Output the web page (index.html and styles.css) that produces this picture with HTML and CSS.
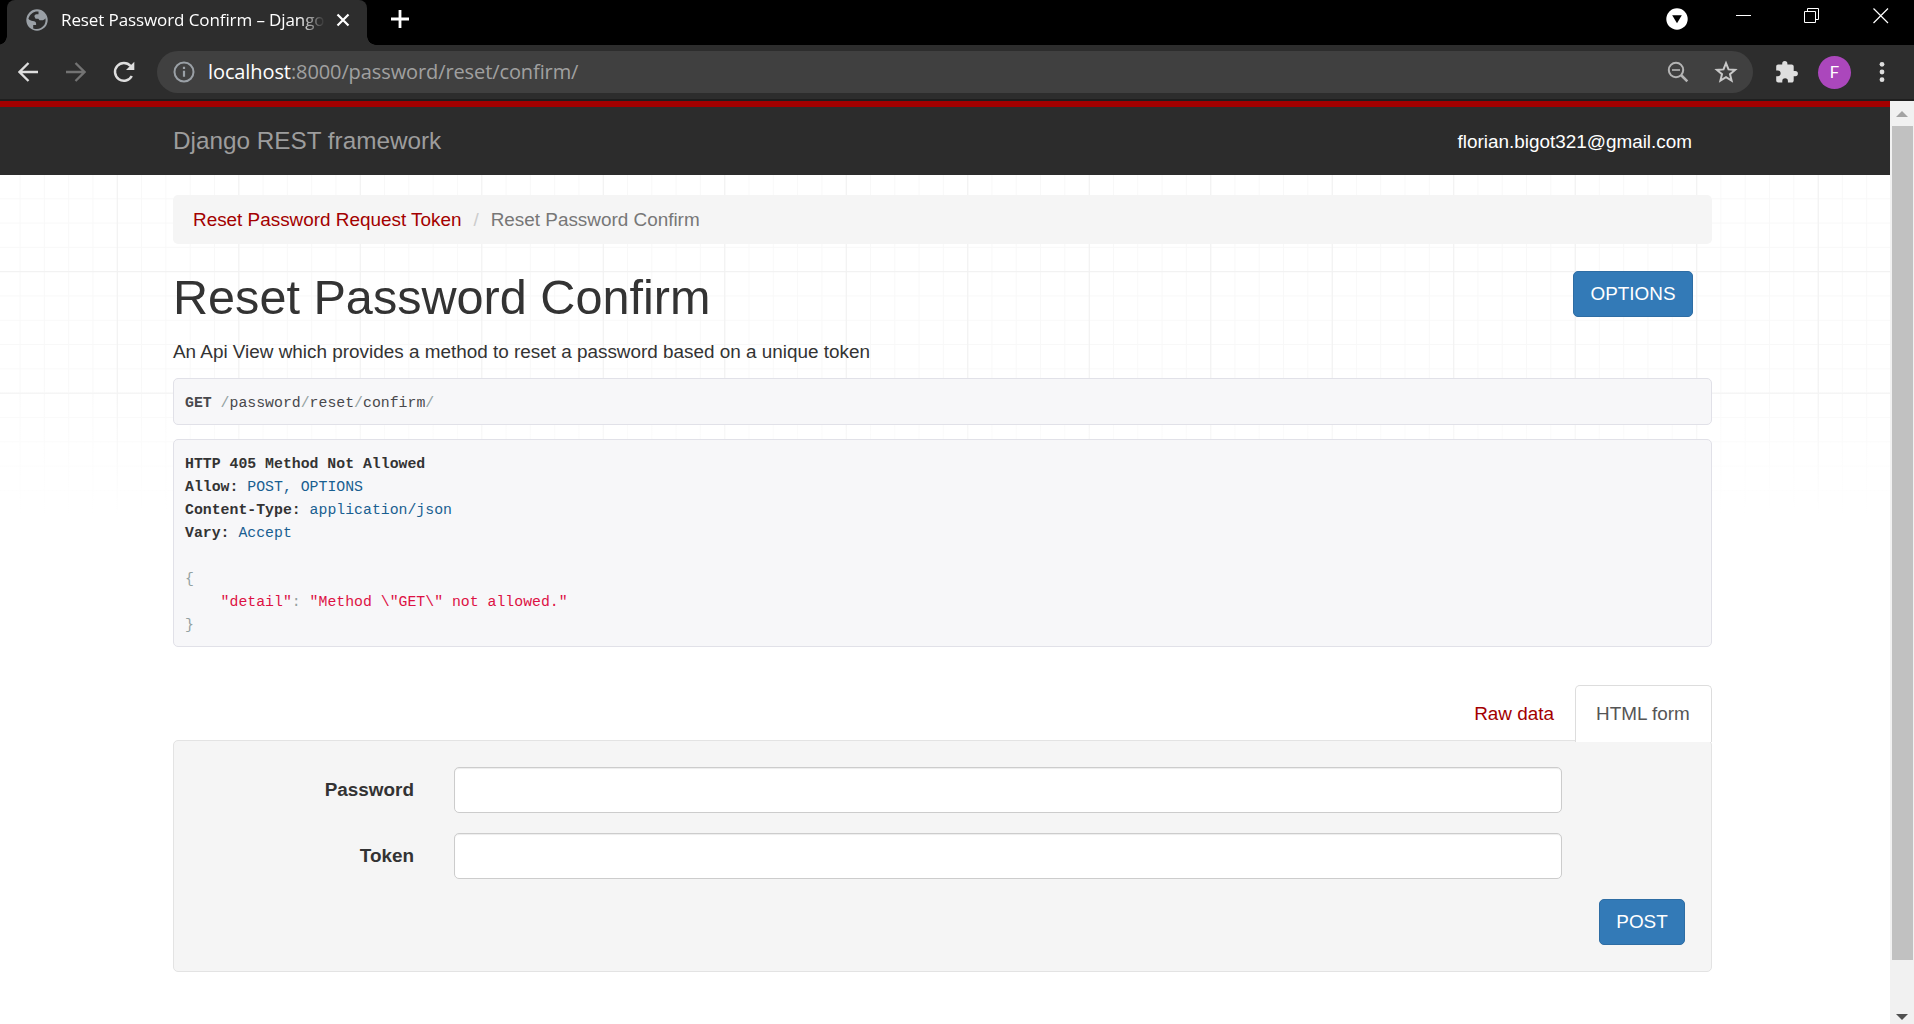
FILE: index.html
```html
<!DOCTYPE html>
<html lang="en">
<head>
<meta charset="utf-8">
<title>Reset Password Confirm – Django REST framework</title>
<link rel="stylesheet" href="styles.css">
</head>
<body>
<div class="window">
  <header class="titlebar">
    <div class="tab">
      <svg class="tab-icon" width="22" height="22" viewBox="0 0 22 22"><circle cx="11" cy="11" r="10.7" fill="#9aa0a6"/><path d="M12.500 2.600C9 1.800 3.600 4.500 2.400 9.800c1.200 1.600 2.600 2 4.400 2.100 2 0.200 3.300 1 3.300 2.700v1.500H7.200v3.300c4.600 1.500 8.300 0.200 11.200-3.700 1.200-2.200 1.400-4.300 1-6.500-0.800 1.500-2 2.100-3.900 2.100h-2l-1.200-1.600H9.600l-1.100-1.900c-0.200-1.500 0.500-2.500 2.100-2.600h1.900z" fill="#2d2d2d"/></svg>
      <span class="tab-title">Reset Password Confirm – Django</span>
      <svg class="tab-close" width="14" height="14" viewBox="0 0 14 14"><path d="M1.500 1.500l11 11M12.500 1.500l-11 11" stroke="#fff" stroke-width="2.200"/></svg>
    </div>
    <svg class="new-tab" width="18" height="18" viewBox="0 0 18 18"><path d="M9 0v18M0 9h18" stroke="#fff" stroke-width="2.800"/></svg>
    <div class="controls">
      <svg width="22" height="22" viewBox="0 0 22 22"><circle cx="11" cy="11" r="10.700" fill="#fff"/><path d="M6.200 7.200h9.600L11 15.200z" fill="#000"/></svg>
      <svg class="minimize" width="16" height="16" viewBox="0 0 16 16"><path d="M0 7.500h15" stroke="#fff"/></svg>
      <svg class="restore" width="16" height="16" viewBox="0 0 16 16"><path d="M0.500 3.500h11v11H0.500zM3.500 3.500V0.500h11v11h-3" fill="none" stroke="#fff"/></svg>
      <svg class="close" width="16" height="16" viewBox="0 0 16 16"><path d="M0.500 0.500l14.500 14.500M15 0.500l-14.500 14.500" stroke="#fff" stroke-width="1.200"/></svg>
    </div>
  </header>

  <div class="toolbar">
    <svg class="nav-icon" width="20" height="20" viewBox="0 0 20 20"><path d="M20 10H2M10.500 1L1.500 10l9 9" fill="none" stroke="#dedede" stroke-width="2.300"/></svg>
    <svg class="nav-icon" width="20" height="20" viewBox="0 0 20 20"><path d="M0 10h18M9.500 1l9 9-9 9" fill="none" stroke="#737373" stroke-width="2.300"/></svg>
    <svg class="nav-icon" width="22" height="22" viewBox="0 0 22 22"><path d="M18.800 15A8.900 8.900 0 1 1 17.600 5" fill="none" stroke="#dedede" stroke-width="2.500"/><path d="M21.300 0.700V9h-8.300z" fill="#dedede"/></svg>
    <div class="omnibox">
      <svg class="info" width="22" height="22" viewBox="0 0 22 22"><circle cx="11" cy="11" r="9.500" fill="none" stroke="#9aa0a6" stroke-width="2"/><path d="M11 9.800v6M11 5.800v2.200" stroke="#9aa0a6" stroke-width="2.200"/></svg>
      <span class="url"><b>localhost</b>:8000/password/reset/confirm/</span>
      <svg class="zoom-out" width="22" height="22" viewBox="0 0 22 22"><circle cx="9" cy="9" r="7.200" fill="none" stroke="#b4b4b4" stroke-width="2"/><path d="M5 9h8" stroke="#b4b4b4" stroke-width="1.600"/><path d="M14 14l6.300 6.300" stroke="#b4b4b4" stroke-width="2.600"/></svg>
      <svg class="star" width="24" height="24" viewBox="0 0 24 24"><path d="M12 3.200l2.500 6.200 6.600 0.500-5.100 4.300 1.600 6.500-5.600-3.500-5.600 3.500L8 14.200 2.900 9.900l6.600-0.500z" fill="none" stroke="#c8c8c8" stroke-width="2"/></svg>
    </div>
    <svg class="puzzle" width="22" height="22" viewBox="0 0 22 22"><path d="M19.300 10h-1.600V5.500c0-1.200-0.900-2.100-2.100-2.100h-4.200V2.700a2.600 2.600 0 0 0-5.200 0v0.700H2.200C1 3.400 0.200 4.300 0.200 5.500v3.900h1.500a2.900 2.900 0 0 1 0 5.800H0.200v4.400c0 1.200 0.900 2 2.100 2h4v-1.500a2.800 2.800 0 0 1 5.600 0v1.500h3.700c1.200 0 2.100-0.900 2.100-2.100v-4.300h1.600a2.600 2.600 0 0 0 0-5.200z" fill="#dedede"/></svg>
    <span class="avatar">F</span>
    <svg class="menu" width="6" height="22" viewBox="0 0 6 22"><g fill="#dedede"><circle cx="3" cy="3.300" r="2.400"/><circle cx="3" cy="11" r="2.400"/><circle cx="3" cy="18.700" r="2.400"/></g></svg>
  </div>

  <div class="viewport">
    <div class="page">
      <nav class="navbar">
        <div class="container navbar-inner">
          <span class="brand">Django REST framework</span>
          <span class="user">florian.bigot321@gmail.com</span>
        </div>
      </nav>
      <main class="content">
        <div class="container">
          <ul class="breadcrumb">
            <li><a>Reset Password Request Token</a></li>
            <li class="separator">/</li>
            <li class="active">Reset Password Confirm</li>
          </ul>
          <div class="page-header">
            <h1>Reset Password Confirm</h1>
            <button class="btn">OPTIONS</button>
          </div>
          <p class="description">An Api View which provides a method to reset a password based on a unique token</p>
          <pre class="request"><b>GET</b> <i>/</i>password<i>/</i>reset<i>/</i>confirm<i>/</i></pre>
          <pre class="response"><b>HTTP 405 Method Not Allowed</b>
<b>Allow:</b> <span class="lit">POST, OPTIONS</span>
<b>Content-Type:</b> <span class="lit">application/json</span>
<b>Vary:</b> <span class="lit">Accept</span>

<i>{</i>
    <span class="str">"detail"</span><i>:</i> <span class="str">"Method \"GET\" not allowed."</span>
<i>}</i></pre>
          <div class="tabs">
            <a class="tab-link">Raw data</a>
            <a class="tab-link selected">HTML form</a>
          </div>
          <form class="well">
            <div class="field"><label for="password">Password</label><input id="password" type="text"></div>
            <div class="field"><label for="token">Token</label><input id="token" type="text"></div>
            <div class="actions"><button class="btn" type="button">POST</button></div>
          </form>
        </div>
      </main>
    </div>
    <div class="scrollbar">
      <svg width="12" height="6" viewBox="0 0 12 6"><path d="M0 6L6 0l6 6z" fill="#a3a3a3"/></svg>
      <div class="thumb"></div>
      <svg class="down" width="12" height="6" viewBox="0 0 12 6"><path d="M0 0l6 6 6-6z" fill="#505050"/></svg>
    </div>
  </div>
</div>
</body>
</html>
```
FILE: styles.css
```css
* { box-sizing: border-box; }
body { margin: 0; background: #fff; color: #333; font: 18.9px/27px "Liberation Sans", Arial, sans-serif; }
svg { display: block; flex: none; }
.window { display: flex; flex-direction: column; width: 1914px; height: 1024px; overflow: hidden; }

/* browser frame */
.titlebar { display: flex; height: 45px; background: #000; font-family: "Open Sans", sans-serif; }
.tab { position: relative; display: flex; width: 360px; margin-left: 7px; padding: 9px 17px 0 19px; background: #2d2d2d; border-radius: 8px 8px 0 0; }
.tab::before, .tab::after { content: ""; position: absolute; bottom: 0; width: 9px; height: 9px; }
.tab::before { right: 100%; background: radial-gradient(circle at 0 0, #000 8.500px, #2d2d2d 9px); }
.tab::after { left: 100%; background: radial-gradient(circle at 100% 0, #000 8.500px, #2d2d2d 9px); }
.tab-title { width: 266px; margin-left: 13px; white-space: nowrap; color: #fff; font-size: 17px; line-height: 22px; letter-spacing: -0.100px; -webkit-mask-image: linear-gradient(90deg, #000 238px, transparent 264px); mask-image: linear-gradient(90deg, #000 238px, transparent 264px); }
.tab-close { margin: 4px 0 0 9px; }
.new-tab { margin: 10px 0 0 24px; }
.controls { display: flex; margin: 8px 25px 0 auto; }
.minimize { margin: 0 0 0 48px; }
.restore { margin: 0 0 0 52px; }
.close { margin: 0 0 0 53px; }

.toolbar { display: flex; align-items: center; height: 56px; padding: 0 29px 0 18px; background: #2d2d2d; border-bottom: 2px solid #1f1f1f; }
.nav-icon { margin-right: 28px; }
.nav-icon + .nav-icon + .nav-icon { margin: 0 22px 0 -1px; }
.omnibox { display: flex; align-items: center; width: 1596px; height: 42px; padding: 0 15px 0 16px; background: #404040; border-radius: 21px; font: 20px/30px "Open Sans", sans-serif; }
.url { margin-left: 13px; color: #a0a0a0; letter-spacing: -0.100px; }
.url b { font-weight: 400; color: #fff; }
.zoom-out { margin-left: auto; }
.star { margin-left: 25px; }
.puzzle { margin-left: 23px; }
.avatar { width: 33px; height: 33px; margin-left: 20px; border-radius: 50%; background: #ab47bc; color: #fff; text-align: center; font: 17px/33px Roboto, sans-serif; }
.menu { margin-left: auto; }

/* page */
.viewport { display: flex; flex: 1; min-height: 0; }
.page { display: flex; flex-direction: column; width: 1890px; }
.container { width: 1539px; margin: 0 auto 0 173px; }
.navbar { height: 74px; background: #2c2c2c; border-top: 6px solid #a30000; }
.navbar-inner { display: flex; justify-content: space-between; align-items: center; height: 66px; padding-right: 20px; }
.brand { color: #9d9d9d; font-size: 24.300px; }
.user { color: #fff; padding-top: 2px; }
.content {
  flex: 1;
  padding-top: 20px;
  background:
    linear-gradient(rgba(255,255,255,0) 200px, #fff 340px),
    linear-gradient(90deg, #f1f1f1 1.200px, transparent 1.200px) 116.800px 0 / 121.500px 100%,
    linear-gradient(#f1f1f1 1.200px, transparent 1.200px) 0 96.200px / 100% 121.500px,
    linear-gradient(90deg, #f8f8f8 1.200px, transparent 1.200px) 19.600px 0 / 24.300px 100%,
    linear-gradient(#f8f8f8 1.200px, transparent 1.200px) 0 23.300px / 100% 24.300px;
}
a { color: #a30000; }
.breadcrumb { display: flex; align-items: center; height: 49px; margin: 0; padding: 0 20px 1px; list-style: none; background: #f5f5f5; border-radius: 5px; }
.separator { padding: 0 12px; color: #ccc; }
.active { color: #777; }
.page-header { display: flex; justify-content: space-between; height: 90px; padding: 27px 19px 0 0; }
h1 { margin: -1px 0 0; font-size: 48.600px; line-height: 54px; font-weight: 500; }
.btn { height: 46px; padding: 0 0 1px; border: 1px solid #2e6da4; border-radius: 5px; background: #337ab7; color: #fff; font: 18.900px/27px "Liberation Sans", Arial, sans-serif; }
.page-header .btn { width: 120px; }
.description { margin: 0 0 13px; padding-top: 4px; }
pre { margin: 0 0 14px; padding: 13px 11px 0; background: #f7f7f9; border: 1px solid #e1e1e8; border-radius: 5px; color: #48484c; font: 14.830px/23.050px "Liberation Mono", monospace; }
pre i { font-style: normal; color: #93a1a1; }
.request { height: 47px; }
.response { height: 208px; margin-bottom: 38px; color: #333; }
.lit { color: #195f91; }
.str { color: #dd1144; }
.tabs { display: flex; justify-content: flex-end; height: 55px; }
.tab-link { height: 57px; padding: 14px 20px; border: 1px solid transparent; border-bottom: 0; }
.selected { position: relative; width: 137px; background: #fff; border-color: #ddd; border-radius: 5px 5px 0 0; color: #555; }
.well { height: 232px; margin: 0; padding: 26px 26px 0; background: #f5f5f5; border: 1px solid #e3e3e3; border-radius: 5px; }
.field { display: flex; align-items: center; height: 46px; margin-bottom: 20px; }
.field label { width: 214px; padding-bottom: 1px; text-align: right; font-weight: 700; }
.field input { width: 1108px; height: 46px; margin-left: 40px; padding: 0 16px; background: #fff; border: 1px solid #ccc; border-radius: 5px; box-shadow: inset 0 1px 1px rgba(0,0,0,.075); font: inherit; }
.actions { display: flex; justify-content: flex-end; }
.actions .btn { width: 86px; }

.scrollbar { display: flex; flex-direction: column; align-items: center; width: 24px; padding: 10px 0 4px; background: #f1f1f1; }
.thumb { width: 21px; height: 834px; margin: 9px 0 0 1px; background: #c1c1c1; }
.down { margin-top: auto; }
```
